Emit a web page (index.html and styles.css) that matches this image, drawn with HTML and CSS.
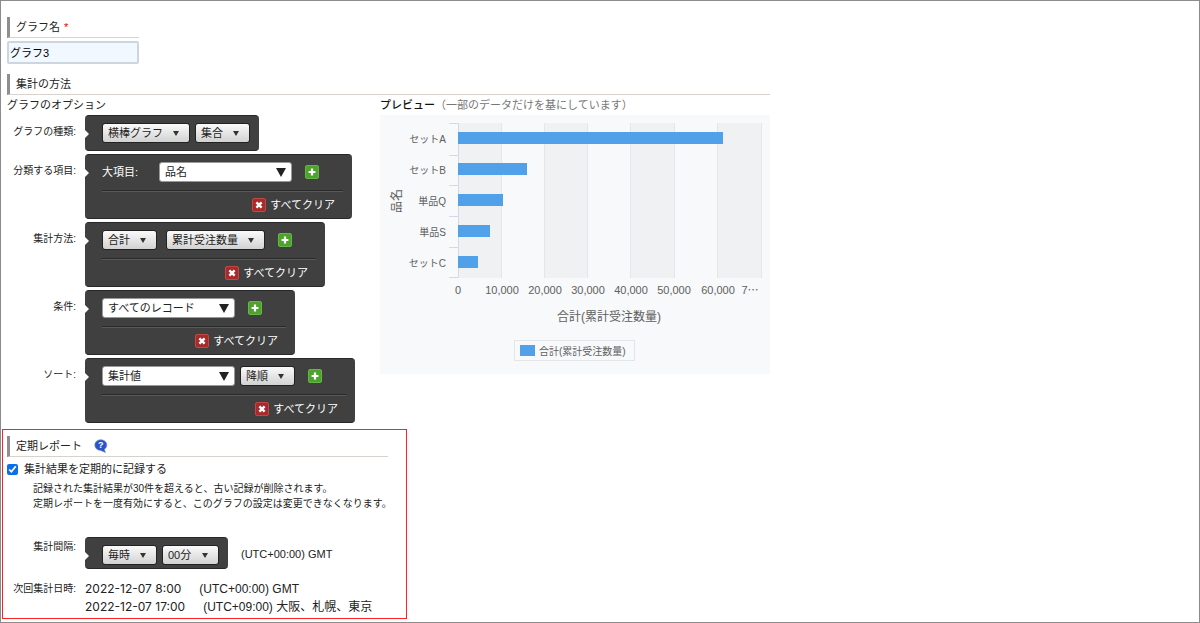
FILE: index.html
```html
<!DOCTYPE html>
<html lang="ja">
<head>
<meta charset="utf-8">
<meta name="viewport" content="width=device-width, initial-scale=1">
<title>グラフの設定</title>
<link rel="stylesheet" href="styles.css">
</head>
<body>
<svg class="sprite" aria-hidden="true">
  <symbol id="icon-add" viewBox="0 0 14 14">
    <rect x=".5" y=".5" width="13" height="13" rx="1.5" fill="#4ea32c" stroke="#65b548"/>
    <path d="M7 3.6v6.8M3.6 7h6.8" stroke="#fff" stroke-width="2.2"/>
  </symbol>
  <symbol id="icon-clear" viewBox="0 0 14 14">
    <rect x=".5" y=".5" width="13" height="13" rx="1.5" fill="#a92a2a" stroke="#bf4a45"/>
    <path d="M4.4 4.4l5.2 5.2M9.6 4.4L4.4 9.6" stroke="#fff" stroke-width="2.4"/>
  </symbol>
</svg>
<main class="frame">
  <form class="settings">
    <section class="name">
      <h2 class="heading"><label for="graph-name">グラフ名<span class="required">*</span></label></h2>
      <input class="name-input" id="graph-name" type="text" value="グラフ3">
    </section>

    <section class="method">
      <h2 class="heading">集計の方法</h2>
      <div class="columns">
        <div class="options">
          <h3 class="subheading">グラフのオプション</h3>
          <div class="fields">
            <div class="field">
              <label class="label" for="kind">グラフの種類:</label>
              <div class="panel panel-short">
                <div class="controls">
                  <select class="pick" id="kind"><option>横棒グラフ</option></select>
                  <select class="pick" aria-label="表示形式"><option>集合</option></select>
                </div>
              </div>
            </div>
            <div class="field">
              <label class="label" for="group">分類する項目:</label>
              <div class="panel">
                <div class="controls row">
                  <span class="level">大項目:</span>
                  <select class="combo" id="group"><option>品名</option></select>
                  <button class="icon-button" type="button" aria-label="追加"><svg class="icon"><use href="#icon-add"/></svg></button>
                </div>
                <button class="clear" type="button"><svg class="icon"><use href="#icon-clear"/></svg>すべてクリア</button>
              </div>
            </div>
            <div class="field">
              <label class="label" for="calc">集計方法:</label>
              <div class="panel">
                <div class="controls row spaced">
                  <select class="pick" id="calc"><option>合計</option></select>
                  <select class="pick" aria-label="集計する項目"><option>累計受注数量</option></select>
                  <button class="icon-button" type="button" aria-label="追加"><svg class="icon"><use href="#icon-add"/></svg></button>
                </div>
                <button class="clear" type="button"><svg class="icon"><use href="#icon-clear"/></svg>すべてクリア</button>
              </div>
            </div>
            <div class="field">
              <label class="label" for="filter">条件:</label>
              <div class="panel">
                <div class="controls row">
                  <select class="combo" id="filter"><option>すべてのレコード</option></select>
                  <button class="icon-button" type="button" aria-label="追加"><svg class="icon"><use href="#icon-add"/></svg></button>
                </div>
                <button class="clear" type="button"><svg class="icon"><use href="#icon-clear"/></svg>すべてクリア</button>
              </div>
            </div>
            <div class="field">
              <label class="label" for="sort">ソート:</label>
              <div class="panel">
                <div class="controls row">
                  <select class="combo" id="sort"><option>集計値</option></select>
                  <select class="pick" aria-label="並び順"><option>降順</option></select>
                  <button class="icon-button" type="button" aria-label="追加"><svg class="icon"><use href="#icon-add"/></svg></button>
                </div>
                <button class="clear" type="button"><svg class="icon"><use href="#icon-clear"/></svg>すべてクリア</button>
              </div>
            </div>
          </div>
        </div>

        <div class="preview">
          <h3 class="subheading preview-title">プレビュー<span class="hint">（一部のデータだけを基にしています）</span></h3>
          <svg class="chart" viewBox="0 0 390 259" role="img" aria-label="品名ごとの合計(累計受注数量)">
            <g fill="#f0f1f3">
              <rect x="78" y="8" width="43" height="155"/>
              <rect x="164" y="8" width="44" height="155"/>
              <rect x="251" y="8" width="43" height="155"/>
              <rect x="337" y="8" width="45" height="155"/>
            </g>
            <path d="M121.5 8v155M164.5 8v155M207.5 8v155M250.5 8v155M294.5 8v155M337.5 8v155M381.5 8v155" stroke="#e4e6e9"/>
            <path d="M69 8.5h9M69 40.5h9M69 70.5h9M69 101.5h9M69 132.5h9M69 162.5h9M78.5 8v155" stroke="#cfdbe8" fill="none"/>
            <g fill="#51a0ea">
              <rect x="78" y="17" width="265" height="12"/>
              <rect x="78" y="48" width="69" height="12"/>
              <rect x="78" y="79" width="45" height="12"/>
              <rect x="78" y="110" width="32" height="12"/>
              <rect x="78" y="141" width="20" height="12"/>
            </g>
            <g class="tick" text-anchor="end">
              <text x="66" y="28">セットA</text>
              <text x="66" y="59">セットB</text>
              <text x="66" y="90">単品Q</text>
              <text x="66" y="121">単品S</text>
              <text x="66" y="152">セットC</text>
            </g>
            <g class="value" text-anchor="middle">
              <text x="78" y="179">0</text>
              <text x="122" y="179">10,000</text>
              <text x="165" y="179">20,000</text>
              <text x="208" y="179">30,000</text>
              <text x="251" y="179">40,000</text>
              <text x="294" y="179">50,000</text>
              <text x="338" y="179">60,000</text>
              <text x="370" y="179">7⋯</text>
            </g>
            <text class="axis" text-anchor="middle" transform="translate(21 86) rotate(-90)">品名</text>
            <text class="axis" text-anchor="middle" x="229" y="206">合計(累計受注数量)</text>
            <rect x="134.5" y="225.5" width="120" height="20" fill="none" stroke="#e3e5e8"/>
            <rect x="140" y="230" width="15" height="11" fill="#51a0ea"/>
            <text class="tick" x="159" y="240">合計(累計受注数量)</text>
          </svg>
        </div>
      </div>
    </section>

    <section class="report">
      <h2 class="heading">定期レポート
        <button class="help" type="button" aria-label="ヘルプ">
          <svg class="help-icon" viewBox="0 0 14 14">
            <path d="M6.7 .8C10 .8 12.8 2.9 12.8 6c0 1.9-1 3.3-2.4 4.2L11.5 13.5 6.5 11.4C3.2 11.3.8 9.1.8 6 .8 2.9 3.5.8 6.7.8z" fill="#2b55c5" stroke="#6f8fe0" stroke-width=".6"/>
            <text x="6.8" y="9.4" text-anchor="middle" class="help-mark">?</text>
          </svg>
        </button>
      </h2>
      <label class="check"><input class="box" type="checkbox" checked>集計結果を定期的に記録する</label>
      <p class="note">記録された集計結果が30件を超えると、古い記録が削除されます。<br>定期レポートを一度有効にすると、このグラフの設定は変更できなくなります。</p>
      <div class="field interval">
        <label class="label label-top" for="every">集計間隔:</label>
        <div class="panel panel-thin">
          <div class="controls">
            <select class="pick" id="every"><option>毎時</option></select>
            <select class="pick" aria-label="分"><option>00分</option></select>
          </div>
        </div>
        <span class="zone">(UTC+00:00) GMT</span>
      </div>
      <div class="field next">
        <span class="label label-top">次回集計日時:</span>
        <div class="times">
          <p class="time"><span class="date">2022-12-07 8:00</span><span>(UTC+00:00) GMT</span></p>
          <p class="time"><span class="date">2022-12-07 17:00</span><span>(UTC+09:00) 大阪、札幌、東京</span></p>
        </div>
      </div>
    </section>
  </form>
</main>
</body>
</html>
```
FILE: styles.css
```css
* {
  box-sizing: border-box;
}

body {
  margin: 0;
  background: #fff;
  color: #222;
  font: 11px/20px "Liberation Sans", "Noto Sans CJK JP", sans-serif;
}

h2, h3, p {
  margin: 0;
  font-size: inherit;
  font-weight: 400;
}

input, select, button {
  margin: 0;
  font: inherit;
  color: inherit;
}

button {
  padding: 0;
  border: 0;
  background: none;
}

.sprite {
  position: absolute;
  width: 0;
  height: 0;
}

.frame {
  min-height: 100vh;
  padding: 16px 0 3px;
  border: 1px solid #8c8c8c;
}

.name {
  width: 132px;
  margin-left: 6px;
}

.heading {
  display: flex;
  align-items: center;
  gap: 12px;
  padding-left: 6px;
  border-left: 3px solid #8e8e8e;
  border-bottom: 1px solid #d8d2ce;
}

.required {
  margin-left: 4px;
  color: #d00;
}

.name-input {
  display: block;
  width: 100%;
  height: 23px;
  margin-top: 3px;
  padding: 0 1px 2px;
  border: 2px solid #ccd6e0;
  border-radius: 2px;
  background: #f2f8ff;
  color: #000;
}

.method {
  max-width: 763px;
  margin: 10px 6px 0;
}

.columns {
  display: flex;
  gap: 19px;
}

.options {
  flex: 0 0 354px;
}

.preview {
  flex: 1;
}

.preview-title {
  color: #111;
  font-weight: 500;
}

.hint {
  color: #777;
  font-weight: 400;
}

.chart {
  display: block;
  width: 100%;
  background: #f7f9fb;
}

.tick {
  fill: #606060;
  font-size: 10px;
}

.value {
  fill: #606060;
  font-size: 11px;
}

.axis {
  fill: #606060;
  font-size: 12px;
}

.fields {
  display: grid;
  gap: 3px;
}

.field {
  display: flex;
  align-items: flex-start;
}

.label {
  flex: 0 0 69px;
  margin-right: 9px;
  padding-top: 7px;
  font-size: 10px;
  text-align: right;
  white-space: nowrap;
}

.label-top {
  padding-top: 0;
}

.panel {
  position: relative;
  padding: 7px 9px 3px 17px;
  border: 1px solid #282828;
  border-width: 1px 0;
  border-radius: 4px;
  background: #404040;
  color: #fff;
}

.panel::before {
  content: "";
  position: absolute;
  top: 14px;
  left: 0;
  border: 4px solid transparent;
  border-left-color: #fff;
  border-right-width: 0;
}

.panel-short {
  padding-bottom: 7px;
}

.panel-thin {
  padding-bottom: 3px;
}

.controls {
  display: flex;
  align-items: center;
  gap: 5px;
}

.spaced {
  gap: 9px;
}

.row {
  padding: 0 24px 8px 0;
  border-bottom: 1px solid #2a2a2a;
  box-shadow: 0 1px #5a5a5a;
}

.level {
  width: 52px;
}

.pick,
.combo {
  appearance: none;
  height: 20px;
  padding: 0 26px 0 5px;
  border: 1px solid #222;
  border-radius: 3px;
  color: #222;
  line-height: 18px;
}

.pick {
  background: url("data:image/svg+xml,%3Csvg xmlns='http://www.w3.org/2000/svg' width='6' height='5'%3E%3Cpath d='M0 0h6L3 5z' fill='%23333'/%3E%3C/svg%3E") no-repeat right 10px center, linear-gradient(#fafafa, #d2d2d2);
}

.combo {
  width: 133px;
  border-color: #999;
  background: #fff url("data:image/svg+xml,%3Csvg xmlns='http://www.w3.org/2000/svg' width='10' height='9'%3E%3Cpath d='M0 0h10L5 9z' fill='%23222'/%3E%3C/svg%3E") no-repeat right 5px center;
}

.icon-button {
  display: flex;
  margin-left: 8px;
}

.spaced .icon-button {
  margin-left: 4px;
}

.icon {
  width: 14px;
  height: 14px;
}

.clear {
  display: flex;
  align-items: center;
  gap: 4px;
  margin: 4px 8px 0 auto;
}

.report {
  max-width: 405px;
  margin: 6px 1px 0;
  padding: 6px 18px 2px 4px;
  border: 1px solid #f22;
}

.help {
  display: flex;
}

.help-icon {
  width: 14px;
  height: 14px;
}

.help-mark {
  fill: #fff;
  font-size: 9px;
  font-weight: 700;
}

.check {
  display: flex;
  align-items: center;
  gap: 6px;
  margin-top: 2px;
}

.box {
  width: 11px;
  height: 11px;
  accent-color: #0b6fe8;
}

.note {
  margin: 2px 0 26px 26px;
  font-size: 10px;
  line-height: 15px;
  white-space: nowrap;
}

.zone {
  margin: 7px 0 0 13px;
}

.next {
  margin-top: 11px;
  line-height: 18px;
}

.times {
  font-size: 12px;
}

.time {
  display: flex;
  gap: 18px;
}

.date {
  font-family: Inter, sans-serif;
}
```
